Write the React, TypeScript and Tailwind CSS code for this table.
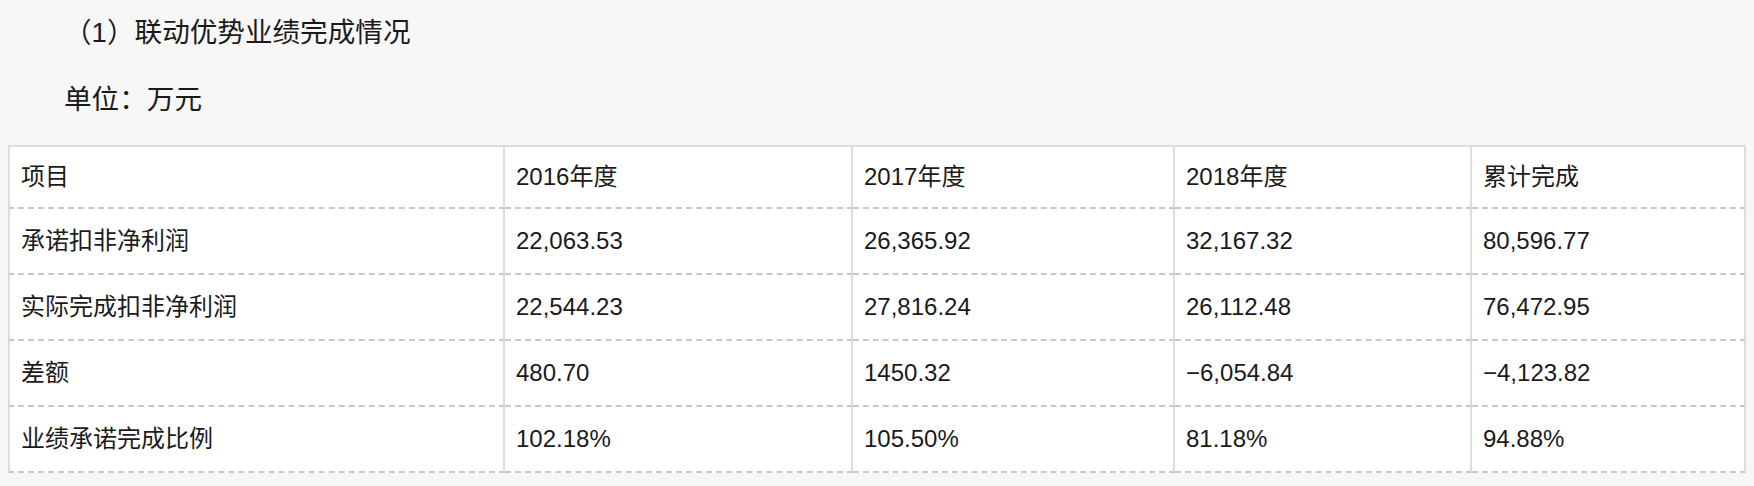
const rows: string[][] = [
  ["项目", "2016年度", "2017年度", "2018年度", "累计完成"],
  ["承诺扣非净利润", "22,063.53", "26,365.92", "32,167.32", "80,596.77"],
  ["实际完成扣非净利润", "22,544.23", "27,816.24", "26,112.48", "76,472.95"],
  ["差额", "480.70", "1450.32", "−6,054.84", "−4,123.82"],
  ["业绩承诺完成比例", "102.18%", "105.50%", "81.18%", "94.88%"],
];

const font = { fontFamily: '"Liberation Sans", "Noto Sans CJK SC", sans-serif' };

export default function App() {
  return (
    <div className="min-h-screen w-full bg-[#f7f7f7] text-[#1a1a1a] pt-[15px]" style={font}>
      <p className="pl-[64px] text-[27.6px] leading-[36px]">（1）联动优势业绩完成情况</p>
      <p className="pl-[64px] mt-[31px] text-[27.6px] leading-[36px]">单位：万元</p>
      <div className="mx-2 mt-[27px]">
        <table className="w-full table-fixed border-separate border-spacing-0 bg-white text-[24px]">
          <colgroup>
            <col className="w-[497px]" />
            <col className="w-[348px]" />
            <col className="w-[322px]" />
            <col className="w-[297px]" />
            <col />
          </colgroup>
          <tbody>
            {rows.map((row, i) => (
              <tr key={i}>
                {row.map((cell, j) => (
                  <td
                    key={j}
                    className={
                      "pl-[11px] align-middle border-r-2 border-b-2 border-r-[#dddddd] border-b-[#c8c8c8] [border-right-style:solid] [border-bottom-style:dashed] " +
                      (j === 0 ? "border-l-2 border-l-[#dddddd] " : "") +
                      (i === 0 ? "border-t-2 border-t-[#dddddd] h-[64px]" : "h-[66px]")
                    }
                  >
                    {cell}
                  </td>
                ))}
              </tr>
            ))}
          </tbody>
        </table>
      </div>
    </div>
  );
}
